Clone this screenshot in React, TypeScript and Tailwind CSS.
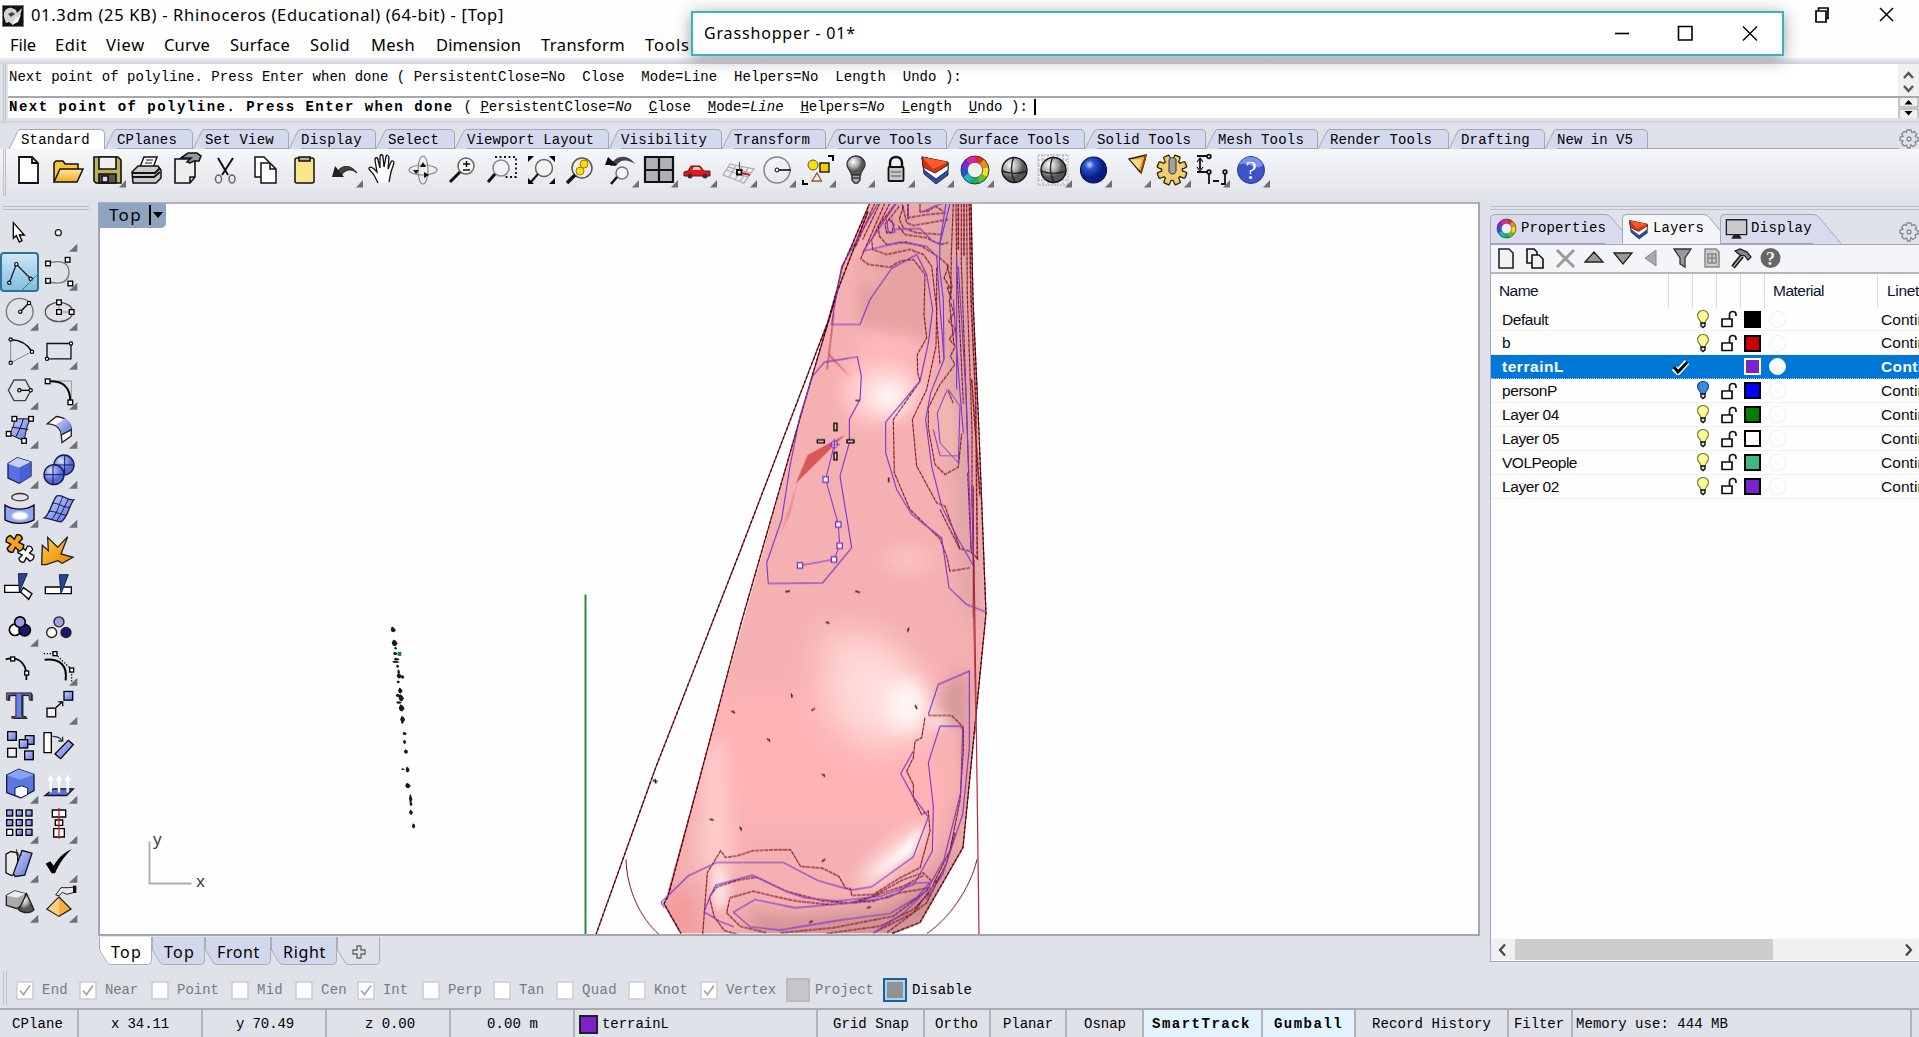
import React, { useLayoutEffect, useRef, useState } from "react";

/* Text whose letter spacing is adjusted so that it fills a given width. */
function Fit({ w, className = "", children }: { w: number; className?: string; children: string }) {
  const ref = useRef<HTMLSpanElement>(null);
  const [ls, setLs] = useState(0);
  useLayoutEffect(() => {
    if (ref.current) setLs((w - ref.current.getBoundingClientRect().width) / children.length);
  }, [w, children]);
  return (
    <span ref={ref} className={"whitespace-pre " + className} style={{ letterSpacing: ls }}>
      {children}
    </span>
  );
}

const MONO = "font-['Liberation_Mono','Noto_Sans_CJK_SC',monospace]";
const UI = "font-['Noto_Sans','Open_Sans',sans-serif]";

/* ---------- title and menu ---------- */
const menus: [string, number, number][] = [
  ["File", 26, 45], ["Edit", 32, 51], ["View", 39, 58], ["Curve", 46, 66], ["Surface", 60, 80],
  ["Solid", 40, 61], ["Mesh", 44, 65], ["Dimension", 85, 105], ["Transform", 84, 104], ["Tools", 45, 45],
];

function TitleArea() {
  return (
    <div className={"h-[58px] bg-[#fefefe] text-black " + UI}>
      <div className="flex h-[31px] items-center pl-[2px]">
        <svg width="22" height="22" viewBox="0 0 22 22">
          <rect width="22" height="22" fill="#111" />
          <path d="M2 12C1 6 5 2 10 3l4 2 1 3 5-5-2 8-4 2-3 7-4-3-3 1z" fill="#d4d4d4" />
          <path d="M6 9l4-2 3 2-4 3z" fill="#444" />
          <path d="M10 20l3-7 6-3-3 7z" fill="#f4f4f4" />
          <rect x=".5" y=".5" width="21" height="21" fill="none" stroke="#777" />
        </svg>
        <Fit w={473} className="ml-[7px] text-[16.5px]">01.3dm (25 KB) - Rhinoceros (Educational) (64-bit) - [Top]</Fit>
        <svg className="-mt-[2px] ml-auto mr-[22px]" width="84" height="20" viewBox="0 0 84 20" fill="none" stroke="#000" strokeWidth="1.700">
          <path d="M3 6h10v11H3zM5.500 6V3h9.500v10.500h-2" />
          <path d="M67 3l13 13M80 3L67 16" strokeWidth="1.500" />
        </svg>
      </div>
      <div className="flex h-[29px] items-center pl-[10px] text-[16.5px]">
        {menus.map(([t, w, step]) => (
          <div key={t} className="shrink-0" style={{ width: step }}>
            <Fit w={w}>{t}</Fit>
          </div>
        ))}
      </div>
    </div>
  );
}

function GrasshopperWindow() {
  return (
    <div className={"absolute left-[691px] top-[11px] flex h-[45px] w-[1093px] items-center border-2 border-[#38b4bb] bg-white pb-[2px] pl-[11px] shadow-[0_3px_16px_rgba(40,30,50,0.45)] " + UI}>
      <Fit w={152} className="text-[16px]">Grasshopper - 01*</Fit>
      <svg className="ml-auto mr-[23px]" width="148" height="20" viewBox="0 0 148 20" fill="none" stroke="#000" strokeWidth="1.600">
        <path d="M4 10.500h14" />
        <path d="M67.500 3.500h13.500v13.500H67.500z" />
        <path d="M132 3.500l14 14M146 3.500l-14 14" strokeWidth="1.400" />
      </svg>
    </div>
  );
}

/* ---------- command line ---------- */
function U({ a, b, v }: { a: string; b: string; v?: string }) {
  return (
    <>
      <u>{a}</u>{b}{v && <i>{v}</i>}
    </>
  );
}

function CommandArea() {
  return (
    <div className={"flex h-[60px] shrink-0 text-[14px] text-black " + MONO}>
      <div className="ml-[3px] h-full w-[3px] border-x border-[#bcc0ca]" />
      <div className="ml-[2px] flex flex-1 flex-col">
        <div className="flex h-[32px] bg-white">
          <div className="flex-1 whitespace-pre pl-px pt-[2px] leading-[23px] tracking-[0.03px]">
            Next point of polyline. Press Enter when done ( PersistentClose=No  Close  Mode=Line  Helpers=No  Length  Undo ):
          </div>
          <svg width="21" height="32" className="bg-[#f0f0f0]" viewBox="0 0 21 32" fill="none" stroke="#555" strokeWidth="2.500">
            <path d="M6 14l4.500-5L15 14M6 22l4.500 5L15 22" />
          </svg>
        </div>
        <div className="flex h-[22px] border-t-2 border-[#a5a8b2] bg-white">
          <div className="flex flex-1 whitespace-pre pl-px leading-[18px]">
            <b className="tracking-[1.48px]">Next point of polyline. Press Enter when done </b>
            <span className="tracking-[0.02px]">
              ( <U a="P" b="ersistentClose=" v="No" />{"  "}<U a="C" b="lose" />{"  "}<U a="M" b="ode=" v="Line" />{"  "}
              <U a="H" b="elpers=" v="No" />{"  "}<U a="L" b="ength" />{"  "}<U a="U" b="ndo" /> ):
            </span>
            <span className="ml-[6px] mt-px h-[16px] w-[2px] bg-black" />
          </div>
          <svg width="21" height="20" viewBox="0 0 21 20" className="bg-[#f0f0f0]">
            <path d="M1 0v9h19V0M1 20v-9h19v9" fill="none" stroke="#999" />
            <path d="M6.500 6.500h8l-4-4.500zM6.500 13h8l-4 4.500z" fill="#000" />
          </svg>
        </div>
      </div>
    </div>
  );
}

function GearOutline() {
  return (
    <svg width="20" height="20" viewBox="0 0 20 20" fill="none" stroke="#85888e" strokeWidth="1.300">
      <path d="M8 1h4l.8 2.600 2.600-1 2.300 2.800-1.600 2L19 9v3l-2.900.8.7 2.700-3 2-1.800-1.800L11 19H8.500l-.8-2.900-2.600.9-2.500-2.600L4 12l-3-.8V8l3-.6L2.700 5l2.600-2.600 2 1.200z" />
      <circle cx="10" cy="10" r="2" />
    </svg>
  );
}

/* ---------- toolbar tabs ---------- */
const tabs: [string, number, number][] = [
  ["Standard", 96, 69], ["CPlanes", 88, 60], ["Set View", 96, 69], ["Display", 87, 61], ["Select", 79, 51],
  ["Viewport Layout", 154, 127], ["Visibility", 113, 86], ["Transform", 104, 76], ["Curve Tools", 121, 94],
  ["Surface Tools", 138, 111], ["Solid Tools", 121, 94], ["Mesh Tools", 112, 86], ["Render Tools", 131, 102],
  ["Drafting", 96, 69], ["New in V5", 103, 76],
];

function ToolTabs() {
  return (
    <div className={"mt-[3px] flex h-[28px] items-end border-t-2 border-[#d0d3dc] pl-[9px] text-[14px] text-black " + MONO}>
      {tabs.map(([t, w, tw], i) => (
        <div key={t} className="flex h-[20px] shrink-0" style={{ width: w }}>
          <svg width="12" height="20" viewBox="0 0 12 20" className="shrink-0">
            <path d="M0 20L9 2Q10 .5 12 .5V20z" fill={i ? "#d5d9ee" : "#fff"} />
            <path d="M0 20L9 2Q10 .5 12 .5" fill="none" stroke="#a4a8b6" />
          </svg>
          <div className={"flex-1 rounded-tr-[5px] border-r border-t border-[#a4a8b6] leading-[20px] " + (i ? "border-b bg-[#d5d9ee]" : "bg-white")}>
            <Fit w={tw}>{t}</Fit>
          </div>
        </div>
      ))}
      <div className="h-px flex-1 bg-[#a4a8b6]" />
      <div className="w-[20px]"><GearOutline /></div>
    </div>
  );
}

/* ---------- shared drawings ---------- */
function Defs() {
  return (
    <svg width="0" height="0" className="absolute">
      <defs>
        <radialGradient id="gs" cx=".35" cy=".3"><stop offset="0" stopColor="#fff" /><stop offset=".6" stopColor="#aaa" /><stop offset="1" stopColor="#555" /></radialGradient>
        <radialGradient id="bs" cx=".35" cy=".3"><stop offset="0" stopColor="#cfe0ff" /><stop offset=".35" stopColor="#2a56d8" /><stop offset="1" stopColor="#0a1d80" /></radialGradient>
        <radialGradient id="ps" cx=".35" cy=".3"><stop offset="0" stopColor="#dfe3ff" /><stop offset="1" stopColor="#5468d8" /></radialGradient>
        <linearGradient id="pg" x1="0" y1="0" x2="1" y2="1"><stop offset="0" stopColor="#cdd5ff" /><stop offset="1" stopColor="#5a6fe0" /></linearGradient>
        <linearGradient id="fo" x1="0" y1="0" x2="0" y2="1"><stop offset="0" stopColor="#ffe9a0" /><stop offset="1" stopColor="#f2a71c" /></linearGradient>
        <linearGradient id="or" x1="0" y1="0" x2="1" y2="1"><stop offset="0" stopColor="#ffcf40" /><stop offset="1" stopColor="#f08000" /></linearGradient>
      </defs>
    </svg>
  );
}

function Wheel({ r = 14 }: { r?: number }) {
  const c = ["#e8281e", "#f28a1a", "#f0e020", "#5cc81e", "#18b060", "#18b8c8", "#2050e0", "#7a28d8", "#e020b0"];
  const n = c.length;
  const p = (q: number) => [20 + r * Math.sin((q / n) * 6.2832), 20 - r * Math.cos((q / n) * 6.2832)];
  return (
    <g>
      {c.map((f, i) => {
        const [a, b] = p(i);
        const [d, e] = p(i + 1.05);
        return <path key={f} d={`M20 20L${a} ${b}A${r} ${r} 0 0 1 ${d} ${e}z`} fill={f} />;
      })}
      <circle cx="20" cy="20" r={r} fill="none" stroke="#333" />
      <circle cx="20" cy="20" r={r * 0.55} fill="#eef0f4" stroke="#444" strokeWidth=".8" />
    </g>
  );
}

const LayersGlyph = () => (
  <g stroke="#222" strokeWidth=".9" strokeLinejoin="round">
    <path d="M7 7L33 13V25L21 34 9 24z" fill="#2a4cb8" />
    <path d="M7 7L33 13V20L21 29 9 20z" fill="#fff" />
    <path d="M7 7L33 12V15L20 23 8 17z" fill="#d83010" />
    <path d="M7 7L33 12 18 19z" fill="#ff5a28" stroke="none" />
  </g>
);

/* ---------- main toolbar ---------- */
const k = "#111";
const mainIcons: [React.ReactNode, boolean][] = [
  [<path d="M11 7h13l6 6v20H11z M24 7v6h6" fill="#fff" stroke={k} strokeWidth="1.800" />, false],
  [<g stroke={k} strokeWidth="1.500"><path d="M7 31V13l2-2h7l2 3h13v5" fill="#f9c63d" /><path d="M7 32l6-13h23l-6 13z" fill="url(#fo)" /></g>, false],
  [<g stroke={k} strokeWidth="1.600"><path d="M7 7h24l3 3v23H9l-2-2z" fill="#b9b25a" /><path d="M12 7h17v12H12z" fill="#eee" /><path d="M12 24h17v9H12z" fill="#555" /><path d="M15 26h6v6h-6z" fill="#ddd" /></g>, true],
  [<g stroke={k} strokeWidth="1.500"><path d="M14 17l4-10h13l-4 11z" fill="#fff" /><path d="M6 22l6-6h20l3 4v8l-5 5H7z" fill="#ccc" /><path d="M6 23h23l5-5M6 27h22l6-5" fill="none" strokeWidth="1.800" /><path d="M20 10h7M19 13h7" strokeWidth="1" /></g>, false],
  [<g stroke={k} strokeWidth="1.600"><path d="M9 9h20v18l-5 6H9z M29 27h-5v6" fill="#eee" /><path d="M15 8l7-5h9l4 3-2 5h-5l-4 2-3-1 4-4z" fill="#999" /></g>, false],
  [<g fill="none"><path d="M13 8l10 17M28 8L17 25" stroke={k} strokeWidth="2" /><ellipse cx="13.500" cy="29" rx="3" ry="4" stroke="#666" strokeWidth="1.500" /><ellipse cx="27" cy="29" rx="3" ry="4" stroke="#666" strokeWidth="1.500" /></g>, false],
  [<g fill="#fff" stroke={k} strokeWidth="1.500"><path d="M10 7h9l5 5v15H10z" /><path d="M16 13h9l6 6v14H16z M25 13v6h6" /></g>, false],
  [<g stroke={k} strokeWidth="1.500"><rect x="11" y="8" width="19" height="25" rx="2" fill="#fbe58a" /><path d="M15 7h11v4H15z" fill="#aaa" /></g>, false],
  [<g><path d="M11 25C16 15 26 13 33 23C27 18 21 19 17 26" fill="#444" stroke="#222" /><path d="M8 27l3-11 9 11z" fill="#222" /></g>, true],
  [<path d="M15 33l-4-8-5-6c0-3 3-2 5 0l3 3-2-12c0-3 3-3 3 0l2 8V7c0-3 3-3 3 0l1 10 2-10c0-3 3-2 3 1l-1 11 3-7c1-2 3-1 3 1l-3 9-2 10" fill="#fff" stroke={k} strokeWidth="1.300" />, false],
  [<g fill="none" stroke="#888" strokeWidth="1.200"><ellipse cx="21" cy="20" rx="5" ry="14" /><ellipse cx="21" cy="20" rx="14" ry="5" /><path d="M21 12l-3 5h6zM14 24l-3-4h6zM22 28l5-3-5-3z" fill="#111" stroke="none" /></g>, false],
  [<g fill="none"><circle cx="24" cy="16" r="8" fill="#f5f5f5" stroke="#666" strokeWidth="1.500" /><path d="M18 22L8 32" stroke={k} strokeWidth="3" /><path d="M21 14h7M24.500 11v6M21 20h7" stroke={k} strokeWidth="1.500" /></g>, false],
  [<g fill="none"><path d="M14 7h21v20H24" stroke={k} strokeWidth="1.800" strokeDasharray="2 2.500" /><circle cx="20" cy="18" r="8" fill="#f0f2f5" stroke="#888" strokeWidth="1.500" /><path d="M14 24l-7 8" stroke={k} strokeWidth="3" /></g>, false],
  [<g><circle cx="23" cy="18" r="8.500" fill="#f3f4f6" stroke="#666" strokeWidth="1.500" /><path d="M17 24l-7 8" stroke={k} strokeWidth="2" /><path d="M7 6h6l-6 6zM34 6v6l-6-6zM7 34v-6l6 6zM34 34v-6l-6 6z" fill="#000" /></g>, false],
  [<g><circle cx="22" cy="18" r="10" fill="#eee" stroke="#555" strokeWidth="1.500" /><circle cx="24" cy="14" r="4" fill="#ffe000" stroke="#a08000" /><circle cx="20" cy="21" r="4" fill="#ffe000" stroke="#a08000" /><path d="M15 25l-8 8" stroke={k} strokeWidth="3.500" /></g>, false],
  [<g><path d="M10 16C16 4 28 4 35 14C28 9 20 9 16 16" fill="#444" /><path d="M5 15l3-8 9 8z" fill="#111" /><circle cx="22" cy="23" r="6" fill="#f5f5f5" stroke="#777" strokeWidth="1.500" /><path d="M17 27l-6 7" stroke={k} strokeWidth="2.500" /></g>, true],
  [<g stroke={k} strokeWidth="2.200"><path d="M6 7h28v25H6z" fill="#aeb1b6" /><path d="M20 7v25M6 20h28" /></g>, true],
  [<g><path d="M6 22l4-1 3-5h9l4 5h6v5H6z" fill="#e01818" stroke="#7a0c0c" /><path d="M14 20l2-3h5l2 3z" fill="#f7c8c8" /><circle cx="12" cy="26" r="2.500" fill="#333" /><circle cx="27" cy="26" r="2.500" fill="#333" /></g>, true],
  [<g fill="none" stroke="#aaa" strokeWidth="1.200"><path d="M12 14l24 5-10 14L5 25zM10 17l23 6M8 20l22 7M18 15L11 28M24 17l-7 13M30 18l-8 14" /><path d="M19 20h4.500v4.500H19z" stroke="#000" fill="#fff" strokeWidth="1.800" /><path d="M24 23l8 2" stroke="#d02020" strokeWidth="2" /><path d="M21.500 20v-8" stroke="#555" /></g>, true],
  [<g fill="none"><circle cx="20" cy="20" r="13" stroke="#888" strokeWidth="1.500" /><path d="M20 20h14" stroke="#000" strokeWidth="1.500" /><circle cx="20" cy="20" r="2" fill="#fff" stroke="#000" /></g>, true],
  [<g><circle cx="16" cy="15" r="5" fill="#ffe000" stroke="#555" /><path d="M23 13h9v9h-9z" fill="#ffc800" stroke="#222" strokeWidth="1.500" /><path d="M20 23l4.500 8H15z" fill="#eee" stroke="#8a5a30" strokeWidth="1.300" /><path d="M31 6h5v5M6 30v4h5" fill="none" stroke="#000" strokeWidth="2" /></g>, true],
  [<g stroke="#333" strokeWidth="1.400"><path d="M15.500 25c0-4-4.500-6-4.500-10.500a9 8.500 0 0 1 18 0c0 4.500-4.500 6.500-4.500 10.500z" fill="url(#gs)" /><path d="M16 25h8v5l-2.500 3h-3L16 30z" fill="#aaa" /><path d="M16 28h8" /></g>, true],
  [<g><path d="M14 17v-4c0-8 12-8 12 0v4" fill="none" stroke={k} strokeWidth="2.500" /><rect x="12.500" y="17" width="15" height="14" rx="1" fill="#c8c9cb" stroke={k} strokeWidth="1.800" /><path d="M15 22h10M15 26h10" stroke="#555" /></g>, true],
  [<LayersGlyph />, true],
  [<Wheel />, true],
  [<g><circle cx="20.500" cy="20" r="12.500" fill="url(#gs)" stroke="#111" strokeWidth="1.400" /><path d="M20 7c-4 8-3 18 1 25M8 21c8 3 17 3 25 0" fill="none" stroke="#222" strokeWidth="1.400" /></g>, false],
  [<g><path d="M5 5h30v30H5zM5 10h30M5 15h30M5 20h30M5 25h30M5 30h30M10 5v30M15 5v30M20 5v30M25 5v30M30 5v30" fill="none" stroke="#b9bcc1" strokeWidth="1.300" strokeDasharray="2 1" /><circle cx="20.500" cy="20" r="12.500" fill="url(#gs)" stroke="#111" strokeWidth="1.400" /><path d="M20 7c-4 8-3 18 1 25M8 21c8 3 17 3 25 0" fill="none" stroke="#222" strokeWidth="1.400" /></g>, true],
  [<circle cx="20.500" cy="20" r="13" fill="url(#bs)" stroke="#0a1350" strokeWidth="1.200" />, true],
  [<g stroke="#222" strokeWidth="1.400"><path d="M17 9l17-4-5 18z" fill="#f7a820" /><path d="M18 9.500l9 10 3-10z" fill="#fbd88a" stroke="none" /><path d="M34 5l-5 18" stroke="#7a4a10" strokeWidth="2" /></g>, true],
  [<g>
    {[0, 45, 90, 135, 180, 225, 270, 315].map(a => <rect key={a} x="17" y="5" width="6" height="8" rx="1" fill="#e8c458" stroke="#2a2205" strokeWidth="1.300" transform={`rotate(${a + 22} 20 20)`} />)}
    <circle cx="20" cy="20" r="10.500" fill="#efcf72" stroke="#2a2205" strokeWidth="1.200" />
    {[0, 45, 90, 135, 180, 225, 270, 315].map(a => <rect key={a} x="17.700" y="7" width="4.600" height="5" fill="#efcf72" transform={`rotate(${a + 22} 20 20)`} />)}
    <path d="M17 10c0-3 7-3 7 0v11c0 4-7 4-7 0z" fill="#a0a0a0" stroke="#333" /></g>, true],
  [<g fill="none" stroke="#111" strokeWidth="1.800"><path d="M6 6h12M6 22h12v12M9 9v10M34 22v12h-4M22 31h6" /><path d="M6 12l3-4 3 4M6 17l3 4 3-4" strokeWidth="1.200" /><circle cx="18" cy="6.500" r="1.800" fill="#fff" /><circle cx="18" cy="22" r="1.800" fill="#fff" /><circle cx="34" cy="22" r="1.800" fill="#fff" /></g>, true],
  [<g><circle cx="20" cy="20" r="13.500" fill="#3c54c8" stroke="#2a3c98" /><path d="M8 15a13 13 0 0 1 24 0C24 22 16 10 8 15" fill="#7b90ec" /><text x="20" y="29" textAnchor="middle" fontSize="25" fill="#fff" fontFamily="Liberation Serif, serif">?</text></g>, true],
];

function MainToolbar() {
  return (
    <div className="flex h-[54px] items-start bg-linear-to-b from-[#f6f7f9] to-[#dee1e7] pl-[3px]">
      <div className="h-[47px] w-[3px] border-x border-[#bcc0ca]" />
      <div className="ml-[2px] flex pt-px">
        {mainIcons.map(([g, tri], i) => (
          <div key={i} className="w-[39.44px] shrink-0">
            <svg width="40" height="40" viewBox="0 0 40 40">
              {g}
              {tri && <path d="M39 30v7.500h-7z" fill="#6e7075" />}
            </svg>
          </div>
        ))}
      </div>
    </div>
  );
}

/* ---------- left tool palette ----------
   Cells are drawn on two continuous sheets: rows 0-8 and rows 9-17. */
const hd = (x: number, y: number, r = 7) => <rect x={x - r} y={y - r} width={2 * r} height={2 * r} fill="#fff" stroke="#000" strokeWidth="4" />;
const cc = (x: number, y: number, r = 5) => <circle cx={x} cy={y} r={r} fill="#fff" stroke="#000" strokeWidth="3.500" />;
const sq = (x: number, y: number, s = 26, f = "url(#pg)") => <rect x={x} y={y} width={s} height={s} fill={f} stroke="#000" strokeWidth="4" />;
const PIECE = "M-9 -22q9-9 18 0l-2 13 14-2q8 10 0 20l-14-2 2 14q-9 8-18 0l2-14-14 2q-8-10 0-20l14 2z";

const palette: [React.ReactNode, boolean][][] = [
  [[<path d="M40 67v47l9-8 9 19 8-4-8-17h15z" fill="#fff" stroke="#000" strokeWidth="4" />, false],
   [<circle cx="176" cy="97" r="9" fill="#fff" stroke="#222" strokeWidth="4" />, true]],
  [[<g><path d="M28 249L49 193l43 44" fill="none" stroke="#222" strokeWidth="4" />{cc(28, 249)}{cc(49, 193)}{cc(92, 237)}<path d="M65 272l50-50" stroke="#3a6f92" strokeWidth="3" /></g>, false],
   [<g><path d="M145 190c40-12 65 0 63 30s-30 35-63 25" fill="none" stroke="#777" strokeWidth="4" />{hd(145, 191)}{hd(204, 180)}{hd(145, 243)}{hd(212, 251)}</g>, true]],
  [[<g><circle cx="59" cy="334" r="40" fill="none" stroke="#777" strokeWidth="4" /><path d="M61 334l25-25" stroke="#000" strokeWidth="4" />{cc(61, 334)}{cc(87, 308)}</g>, true],
   [<g><ellipse cx="178" cy="335" rx="41" ry="29" fill="none" stroke="#555" strokeWidth="4" /><path d="M178 306v29h38" fill="none" stroke="#888" strokeWidth="3" />{hd(178, 306)}{hd(178, 335)}{hd(216, 335)}</g>, true]],
  [[<g fill="none"><path d="M32 419v70l64-34" stroke="#888" strokeWidth="3" /><path d="M32 419c35 2 52 15 64 37" stroke="#000" strokeWidth="5" />{cc(32, 419)}{cc(32, 489)}{cc(96, 456)}</g>, true],
   [<g><path d="M142 431h72v46h-72z" fill="none" stroke="#111" strokeWidth="4" />{cc(214, 431)}{cc(142, 477)}</g>, true]],
  [[<g><path d="M25 570l17-31h34l17 31-17 31H42z" fill="none" stroke="#444" strokeWidth="4" /><path d="M58 570h34" stroke="#000" strokeWidth="4" />{cc(58, 570)}{cc(92, 570)}</g>, true],
   [<g><path d="M152 542h63v58" fill="none" stroke="#999" strokeWidth="3" /><path d="M144 543c45-3 68 15 68 62" fill="none" stroke="#000" strokeWidth="6" />{hd(144, 543)}{hd(212, 606)}</g>, true]],
  [[<g stroke="#111" strokeWidth="3"><path d="M43 657h50c-15 20-15 45-21 66L26 702c15-15 17-30 17-45z" fill="url(#pg)" /><path d="M35 682l50 7M70 657c-6 20-12 35-22 53" fill="none" />{hd(43, 657)}{hd(93, 657)}{hd(26, 702)}{hd(72, 723)}</g>, true],
   [<g stroke="#222" strokeWidth="4"><path d="M143 672l27-22c27 2 45 20 45 40l-30 18c0-20-15-36-42-36z" fill="#fff" /><path d="M167 675l30-20c14 8 18 22 18 35l-30 15c0-15-6-25-18-30z" fill="url(#pg)" stroke="none" /><path d="M185 705l30-15v18l-28 20z" fill="#fff" /></g>, true]],
  [[<g stroke="#1a2050" strokeWidth="4"><path d="M24 790l28-18 41 13v42l-35 22-34-16z" fill="#5a70e0" /><path d="M24 790l28-18 41 13-35 17z" fill="#c6d0ff" stroke="none" /><path d="M58 802v46l34-20v-43z" fill="#4a60d4" stroke="none" /></g>, true],
   [<g stroke="#111a50" strokeWidth="4"><circle cx="193" cy="794" r="30" fill="url(#ps)" /><circle cx="163" cy="823" r="30" fill="url(#ps)" /><path d="M164 794h58M195 765v58M134 823h56M160 795v57" strokeWidth="3" /></g>, true]],
  [[<g stroke="#000" strokeWidth="4"><ellipse cx="60" cy="892" rx="25" ry="11" fill="none" stroke="#333" /><path d="M15 916c25 16 62 16 87 0v44c-25 14-62 14-87 0z" fill="#93a4f4" /><ellipse cx="60" cy="948" rx="24" ry="12" fill="#fff" stroke="#c8d0ff" /></g>, true],
   [<g stroke="#111a50" strokeWidth="4"><path d="M172 888c20-5 30 15 50 12-15 20-18 55-38 66-20-2-30-10-50-12 18-10 22-50 38-66z" fill="url(#pg)" /><path d="M190 889c-12 25-18 55-35 70M207 897c-15 25-20 45-36 66M157 910c20-2 32 15 55 12M146 934c20-2 30 10 53 12" fill="none" strokeWidth="3" /></g>, true]],
  [[<g stroke="#111" strokeWidth="4"><path d={PIECE} transform="translate(77 1062) rotate(35) scale(1.050)" fill="#fff" /><path d={PIECE} transform="translate(44 1030) rotate(35) scale(1.150)" fill="#f9a21c" /></g>, false],
   [<path d="M128 1035l18 16-2-40 30 30 30-32-20 52 36 10-32 18-14-8-34 12h-14z" fill="url(#or)" stroke="#222" strokeWidth="4" />, false]],
  [[<g stroke="#000" strokeWidth="4"><path d="M14 77h45v21H14zM70 84l26 18-10 17-24-22z" fill="#fff" /><path d="M55 42h27L58 97z" fill="#2a4490" stroke="#142050" strokeWidth="3" /></g>, false],
   [<g stroke="#000" strokeWidth="4"><path d="M137 82h78v20h-78z" fill="#fff" /><path d="M179 45h27l-22 58z" fill="#2a4490" stroke="#142050" strokeWidth="3" /></g>, false]],
  [[<g strokeWidth="5" stroke="#000"><circle cx="45" cy="209" r="17" fill="#fff" /><circle cx="74" cy="210" r="17" fill="#1c1470" /><circle cx="60" cy="186" r="16" fill="#a49ae8" /></g>, true],
   [<g strokeWidth="4" stroke="#222"><circle cx="178" cy="185" r="15" fill="#a49ae8" /><circle cx="156" cy="217" r="15" fill="#fff" /><circle cx="199" cy="217" r="15" fill="#1c1470" /></g>, false]],
  [[<g fill="none" stroke="#000" strokeWidth="5"><path d="M17 299c45-12 66 20 62 62" />{hd(38, 298, 6)}{hd(80, 340, 6)}</g>, false],
   [<g fill="none" stroke="#000" strokeWidth="6"><path d="M135 300c50-4 68 20 63 62" /><path d="M132 282h34l50 48v40" strokeWidth="4" strokeDasharray="4 5" />{hd(166, 282, 6)}{hd(216, 331, 6)}</g>, true]],
  [[<g><text x="61" y="479" textAnchor="middle" fontSize="116" fontWeight="bold" fill="#222" fontFamily="Liberation Serif, serif">T</text><text x="57" y="476" textAnchor="middle" fontSize="116" fontWeight="bold" fill="#6a80e8" stroke="#222" strokeWidth="3" fontFamily="Liberation Serif, serif">T</text></g>, false],
   [<g>{sq(193, 397)}{sq(142, 447, 26, "#f2f2f2")}<path d="M168 446l18-16M176 428h13v13" fill="none" stroke="#000" strokeWidth="4" /></g>, true]],
  [[<g>{sq(23, 516)}{sq(76, 528)}{sq(58, 540, 25)}{sq(23, 566, 26, "#f2f2f2")}{sq(74, 574)}</g>, false],
   [<g stroke="#000" strokeWidth="4"><path d="M133 519h22v60h-22z" fill="#fff" /><path d="M166 583l40-41 15 13-38 42z" fill="url(#pg)" /><path d="M158 530c16 0 24 5 28 12M176 544l13 0v-13" fill="none" stroke="#333" /></g>, false]],
  [[<g stroke="#111a40" strokeWidth="4"><path d="M20 648l36-18 46 16v48l-40 22-42-16z" fill="#5c78e0" /><path d="M20 648l36-18 46 16-40 16z" fill="#8aa2f6" stroke="none" /><path d="M45 686l20-6 18 6v20l-20 10-18-8z" fill="#fff" strokeWidth="3" /></g>, true],
   [<g><path d="M136 709l25-20h60l-20 20z" fill="#5a70e0" stroke="#111" strokeWidth="4" /><path d="M153 700v-45M178 700v-45M204 700v-45" stroke="#fff" strokeWidth="7" /><path d="M143 664l10-18 10 18zM168 664l10-18 10 18zM194 664l10-18 10 18z" fill="#fff" /></g>, true]],
  [[<g>{[0, 1, 2].map(r => [0, 1, 2].map(c => <g key={r * 3 + c}>{sq(20 + c * 29, 751 + r * 29, 18, r === 2 && c === 0 ? "#fff" : "url(#pg)")}</g>))}</g>, true],
   [<g fill="#fff" stroke="#000" strokeWidth="4"><path d="M158 751h40v21h-40zM167 781h22v16h-22zM162 807h32v25h-32z" /><path d="M178 745v92" stroke="#d81818" /></g>, true]],
  [[<g stroke="#111" strokeWidth="4"><path d="M18 885l15-8 20 4v60l-18 8-17-8z" fill="#e8e8e8" /><path d="M66 874l30 8-22 66-28 4-6-8z" fill="url(#pg)" /><path d="M50 870v18h16" fill="none" stroke="#333" strokeWidth="3" /></g>, true],
   [<path d="M138 914l14-8 10 14c12-22 30-40 54-50-22 20-36 42-50 72h-10z" fill="#000" />, true]],
  [[<g stroke="#222" strokeWidth="4"><path d="M19 1008l25-14 32 8v28l-25 17-32-10z" fill="#aaa" /><path d="M19 1008l25-14 32 8-25 12z" fill="#eee" stroke="none" /><path d="M80 1002l-24 48c14 12 36 12 46 0z" fill="url(#gs)" /></g>, true],
   [<g stroke="#222" strokeWidth="4"><path d="M178 1012l36 36-36 22-36-22z" fill="#f5b040" /><path d="M178 1014v54l-33-20z" fill="#fbd080" stroke="none" /><path d="M168 1006l16-22h24l16-2v16l-22 6-14-6-10 10z" fill="#e8e8e8" strokeWidth="3" /><path d="M220 978h10v22h-10z" fill="#111" stroke="none" /></g>, true]],
];

function Palette() {
  return (
    <div className="w-[98px] shrink-0">
      <div className="ml-[3px] mt-[4px] h-[4px] w-[86px] border-y border-[#b4b8c2]" />
      <div className="mt-[3px] grid grid-cols-[39.33px_39.33px]">
        {palette.map((row, r) =>
          row.map(([g, tri], c) => {
            const oy = r < 9 ? 38 + 118.5 * r : 25 + 118.5 * (r - 9);
            const ox = c * 118;
            const on = r === 1 && c === 0;
            return (
              <div key={`${r}-${c}`} className={"h-[39.46px] " + (on ? "rounded-[4px] border-2 border-[#2f7199] bg-linear-to-b from-[#cfe6f4] to-[#7fbfe0]" : "")}>
                <svg className={on ? "-ml-[2px] -mt-[2px]" : ""} width="39.33" height="39.5" viewBox={`${ox} ${oy} 118 118.5`} overflow="visible">
                  {g}
                  {tri && <path d={`M${ox + 115} ${oy + 92}v24h-25z`} fill="#6e7075" />}
                </svg>
              </div>
            );
          })
        )}
      </div>
    </div>
  );
}

/* ---------- viewport ---------- */
const RED = "#7c1220";
const PUR = "#7a35cf";

const ticksLower: [number, number, number][] = [
  [743, 70, 20], [985, 91, -70], [460, 338, 25], [635, 289, 80], [700, 330, -30], [566, 422, 45], [1008, 323, 60],
  [731, 528, 40], [395, 661, 10], [482, 688, 65], [731, 783, -35], [867, 924, -10], [693, 967, -20],
];

const trail: [number, number, number, number][] = [
  [40, 46, 16, 14], [38, 40, 10, 7], [44, 85, 18, 20], [47, 101, 9, 8], [46, 117, 14, 10], [50, 134, 18, 8], [48, 142, 24, 7], [53, 155, 10, 10],
  [56, 172, 8, 16], [58, 184, 16, 16], [68, 187, 11, 11], [55, 202, 10, 8], [61, 228, 14, 18], [55, 243, 16, 10], [64, 250, 16, 22], [57, 264, 18, 8],
  [65, 280, 18, 22], [68, 314, 15, 20], [67, 324, 8, 8], [74, 357, 13, 10], [74, 382, 10, 13], [78, 411, 13, 13], [69, 464, 12, 5], [83, 465, 12, 18],
  [84, 513, 17, 16], [92, 552, 10, 28], [93, 568, 9, 13], [93, 593, 12, 15], [101, 634, 10, 16],
];

function Scene() {
  return (
    <svg className="block" width="1378" height="730" viewBox="100 204.5 1378 730">
      <defs>
        <clipPath id="body">
          <path d="M870 203L850 250 842 268 837 290 825 330 812 377 668 890 664 906 680 934 894 934 920 923 963 848 986 614 978 433 973 300 971 203z" />
        </clipPath>
        <filter id="b8" x="-50%" y="-50%" width="200%" height="200%"><feGaussianBlur stdDeviation="9" /></filter>
        <filter id="b16" x="-50%" y="-50%" width="200%" height="200%"><feGaussianBlur stdDeviation="17" /></filter>
        <filter id="b4" x="-50%" y="-50%" width="200%" height="200%"><feGaussianBlur stdDeviation="4" /></filter>
      </defs>

      {/* shaded terrain */}
      <g clipPath="url(#body)">
        <path d="M640 200h360v740H640z" fill="#f5b0b1" />
        <path d="M700 690h280v140H720z" fill="#ffb3b5" filter="url(#b16)" />
        <path d="M925 200h55v440l-20-40-10-200z" fill="#dfa5a7" filter="url(#b8)" />
        <path d="M862 210l60-4 10 140-50-6-22-20 28-58z" fill="#e4a2a2" filter="url(#b8)" />
        <path d="M855 262l36-12 30 16v70l-60-10z" fill="#e6a2a1" filter="url(#b4)" />
        <ellipse cx="868" cy="275" rx="18" ry="10" fill="#fbbcbc" opacity=".6" filter="url(#b8)" />
        <path d="M866 330l58 10-16 50-45 45-25-40z" fill="#ffb9ba" filter="url(#b8)" />
        <ellipse cx="884" cy="394" rx="38" ry="28" fill="#ffd8d8" opacity=".8" filter="url(#b8)" />
        <ellipse cx="888" cy="397" rx="16" ry="16" fill="#fff" opacity=".85" filter="url(#b8)" />
        <ellipse cx="908" cy="560" rx="26" ry="12" fill="#fcc2c2" filter="url(#b8)" />
        <path d="M940 395c8 0 15 8 16 28l-2 36-16-10z" fill="#f3b6b0" filter="url(#b4)" />
        <path d="M820 628l60 8 38 44 14 45-60 30-50-40z" fill="#ffcfcf" filter="url(#b16)" />
        <path d="M850 650l40 10 34 56-26 20-48-20z" fill="#ffe0df" filter="url(#b16)" />
        <ellipse cx="908" cy="706" rx="20" ry="26" fill="#fff" opacity=".75" filter="url(#b8)" />
        <ellipse cx="945" cy="724" rx="12" ry="12" fill="#fff" opacity=".7" filter="url(#b4)" />
        <path d="M928 815L880 882l-25 2 24-28z" fill="#ffecec" filter="url(#b8)" />
        <path d="M925 822l-12 32-40 24z" fill="#fff" filter="url(#b4)" />
        <path d="M704 740l20 0 10 130-36 6z" fill="#ffd2d2" opacity=".8" filter="url(#b8)" />
        <ellipse cx="720" cy="888" rx="9" ry="22" fill="#fff" opacity=".6" filter="url(#b4)" />
        <path d="M940 690l29-22v120l-12 74-24 60h-36l54-75 8-60z" fill="#d29598" filter="url(#b8)" />
        <path d="M934 730l26-3v60l-10 20z" fill="#f7b3b2" filter="url(#b4)" />
        <path d="M742 912l50 6 92-10 40-24 10 20-30 34H760z" fill="#c98c8e" opacity=".9" filter="url(#b8)" />
        <path d="M668 880l24 16 12 40h-40z" fill="#f08888" opacity=".55" filter="url(#b8)" />
      </g>

      {/* darker facets */}
      <g transform="translate(740 200) scale(.33333)" fill="#d04a4a" opacity=".85">
        <path d="M315 706L203 766 167 852 275 745z" />
        <path d="M262 455l10 22 62 58z" opacity=".8" />
        <path d="M282 340L261 510" fill="none" stroke="#a02828" strokeWidth="3" />
        <path d="M172 850l-50 150 30-60z" opacity=".35" />
      </g>

      {/* outlines of the terrain and of the construction curves */}
      <g fill="none" stroke="#a01020" strokeWidth="1.200">
        <path id="rim" d="M870 203L850 250 842 268 837 290 828 322 740 552 655 770 596 935M868 212L838 290 812 377 741 624 668 897 664 904 681 934M971 203L973 300 979 433 986 614 963 848 920 923 892 934" />
        <use href="#rim" stroke="#160408" strokeDasharray="2.500 2.500" />
        <path d="M974 560L977 780 979 935" stroke="#b02a34" />
        <path d="M626 860C627 890 640 918 659 935M977 860C970 890 948 920 927 934" strokeWidth="1" stroke={RED} />
      </g>

      {/* upper contours */}
      <g transform="translate(740 200) scale(.33333)" fill="none" strokeWidth="3.300">
        <g stroke={RED} strokeDasharray="12 2.500">
          <path d="M405 10L345 145M420 10L368 120M435 10L372 155 362 178 385 195 450 203 480 185 520 180 555 225 552 345 560 415 532 465 533 520 540 545 460 660 463 820 510 930 600 1018 620 1070 630 1115 690 1105" />
          <path d="M450 10L395 120 398 150 440 165 510 150 550 165 575 200 590 330 588 440 560 570 517 660 530 800 590 910 615 920 660 1048 690 1055 715 1080" />
          <path d="M468 10L415 80 418 110 440 135 500 128 545 140 600 175 626 200 612 235 630 265 622 265 635 300" />
          <path d="M478 20L435 75 440 100 455 100 462 75 445 58M490 20L478 60 490 85 530 100 605 105" />
          <path d="M487 15L500 70 520 78 625 60M475 80L495 105 560 115 600 135 625 130M503 10v45l60-10 55-5M540 12v25l25-2 20-15 25 15" />
          <path d="M632 310l10 30-16 25 20 25-18 30 18 20-15 30 14 25-45 60-35 70 0 60 20 110 30 30 40-22 10-100" />
          <path d="M622 200l14 60-8 45 14 130M590 205v150l10 140M625 575l14 35" />
          <path d="M640 12l-6 150-2 140M648 12l2 180 20 420M664 12v180l14 390 8 240M680 12l2 280 14 400 0 230" />
          <path d="M655 10v140M672 12v160M688 10l5 290 14 300 5 480M695 540l25 350" strokeWidth="4.500" />
          <path d="M600 930l60 120M683 820l10 230" />
        </g>
        <g stroke={PUR}>
          <path d="M415 10L305 200 280 340 275 375 360 375 390 300 455 207 530 165 560 225 578 330 565 430 540 545 437 668 437 760 470 870 515 945 605 1015 627 1165 680 1215 740 1238" />
          <path d="M470 10L370 155 480 128 560 140 590 170 600 320 612 480 572 580 557 660 575 800 605 920 655 1020 700 1098 695 860" />
          <path d="M440 60L445 98 465 98 455 60M465 90l75-3 40 40 20 5 30-120M505 10v50M540 40l70-30" />
          <path d="M600 130L598 200 610 300 612 480M618 10L600 130M650 170v400M640 300l20 280 10 120M655 200l24 400 15 460" />
          <path d="M253 488L352 472 364 530 360 600 328 660 328 730 300 830 318 940 335 1045 248 1150 85 1152 80 1090 125 960 150 800 180 650 218 530z" />
          <path d="M622 570L592 640 600 730 655 790 660 620 625 570M580 690l20 78h55" strokeWidth="3" />
        </g>
        <g stroke={PUR} strokeWidth="3">
          <path d="M180 1098L282 1080 299 1039 295 975 257 840 283 735" />
          {[[180, 1098], [282, 1080], [299, 1039], [295, 975], [257, 840]].map(([x, y]) => (
            <rect key={y} x={x - 8} y={y - 8} width="16" height="16" fill="#fff" strokeWidth="4" />
          ))}
          <circle cx="283" cy="735" r="10" fill="#f2c0d0" />
          <path d="M266 735h34M283 718v34" />
        </g>
        <g stroke="#000" strokeWidth="4" fill="#f2c8c8">
          <path d="M282 671h9v22h-9zM282 759h9v22h-9zM232 721h21v9h-21zM321 721h21v9h-21z" />
        </g>
        <path d="M700 860V1255" stroke="#902030" />
        <path d="M346 603h14M446 834v14M136 1177l14-3M346 1175l14 4" stroke="#5a2028" strokeWidth="5" />
      </g>

      {/* lower contours */}
      <g transform="translate(580 600) scale(.33333)" fill="none" strokeWidth="3.300">
        <g stroke={RED} strokeDasharray="12 2">
          <path d="M1045 348h70l35 35 0 70-10 150-30 150-50 100M1035 355l-10 60-20 10-5 50-20 40 20 40 0 40 25 50 20-10 5 60-30 110-60 30-80 50-65 3-3-20-15-2-20-35-50-25-65-5-30-50h-50l-65 3-45 15-35 5-15-20-40 65-15 200 35 50" />
          <path d="M1055 845l-25-25-60 20-100 55-60 15-80-5-110-30-90-42-60 10-60 20-22 30 15 60 30 40 50 15" />
          <path d="M1050 865L960 880 880 905 750 915 650 905 580 890 520 875 450 895 440 940 480 980 560 1000" />
          <path d="M1045 870L940 950 760 985 600 1000M1048 880L1000 930 900 980 740 1002M1080 830l-80 110-120 60M1125 700l-25 90-60 120-120 90" />
          <path d="M1030 828L970 860 880 890 820 912" />
        </g>
        <g stroke={PUR}>
          <path d="M1045 345l30-90 93-40v230l-20 200-60 180-50 75" />
          <path d="M1000 455l-38 67 38 70 45 60-45 120-125 90-60 10-100-28-105-55H410l-85 40-82 80 10 15" />
          <path d="M1080 380h62l6 10-6 190-50 200-50 90-70 70-90 60M1080 380l-35 110 15 130-3 135-55 100-100 35-130 15-100-10-55-20-100-48-110 30-15 30-20 50 50 30 40 15" />
          <path d="M460 938l65-38 120 25 170-15 110-15 30-15 35-28 60-3-40 45-80 48-150 20-180 30-90-10z" />
        </g>
        {ticksLower.map(([x, y, a]) => (
          <path key={`${x}-${y}`} d="M-7 0h12M-2 -3l8 4" transform={`translate(${x} ${y}) rotate(${a})`} stroke="#5a2028" strokeWidth="4" />
        ))}
        <path d="M218 545h16M226 538v14M220 539l10 12" stroke="#111" strokeWidth="3" />
        <path d="M1180 0l8 400" stroke="#b04050" strokeWidth="3" />
      </g>

      {/* people placed along the path */}
      <g transform="translate(380 615) scale(.33333)" fill="#141a18">
        {trail.map(([x, y, w, h]) => (
          <path key={`${x}-${y}`} d={`M${x - w / 2} ${y}l${w * 0.3} ${-h / 2} ${w * 0.4} ${h * 0.2} ${w * 0.3} ${h * 0.4} ${-w * 0.4} ${h * 0.4} ${-w * 0.4} ${-h * 0.1}z`} />
        ))}
        <rect x="53" y="112" width="11" height="12" fill="#187850" />
      </g>

      {/* axes */}
      <path d="M585.500 595V935" stroke="#2d8a3e" strokeWidth="2" />
      <path d="M149.500 842v42h42" fill="none" stroke="#a9abaf" strokeWidth="1.800" />
      <text x="153" y="845" fontSize="17" fill="#444" fontFamily="Noto Sans, sans-serif">y</text>
      <text x="196" y="887" fontSize="17" fill="#444" fontFamily="Noto Sans, sans-serif">x</text>
    </svg>
  );
}

const viewTabs: [string, number, number][] = [["Top", 53, 31], ["Top", 53, 31], ["Front", 66, 43], ["Right", 66, 43], ["", 43, 0]];

function Viewport() {
  return (
    <div className="w-[1382px] shrink-0">
      <div className="relative h-[734px] border-2 border-[#a3a6ae] border-t-[#b0b3ba] bg-[#fefefe]">
        <Scene />
        <div className={"absolute -left-px -top-px flex h-[25px] w-[67px] items-center rounded-br-[5px] bg-[#8fa4c1] pb-px pl-[10px] text-black " + UI}>
          <Fit w={33} className="text-[17px]">Top</Fit>
          <span className="ml-[7px] h-[20px] w-[2px] bg-black" />
          <svg className="ml-[2px]" width="10" height="6" viewBox="0 0 10 6"><path d="M0 0h10L5 6z" fill="#000" /></svg>
        </div>
      </div>
      <div className={"mt-px flex h-[28px] pl-px text-[16px] text-black " + UI}>
        {viewTabs.map(([t, w, tw], i) => (
          <div key={i} className="flex h-[28px]" style={{ width: w }}>
            <svg width="12" height="28" viewBox="0 0 12 28" className="shrink-0">
              <path d="M0 0v13l8 13q1 1.500 4 1.500V0z" fill={i === 0 ? "#fff" : i === 4 ? "#dfe2e8" : "#d3d7ec"} />
              <path d="M.5 0v13l8 13q1 1.500 4 1.500" fill="none" stroke="#a9adb8" />
            </svg>
            <div className={"flex flex-1 items-center rounded-br-[5px] border-b border-r border-[#a9adb8] pt-[2px] " + (i === 0 ? "bg-white" : i === 4 ? "bg-[#dfe2e8]" : "bg-[#d3d7ec]")}>
              {t ? <Fit w={tw}>{t}</Fit> : (
                <svg className="ml-[3px]" width="14" height="14" viewBox="0 0 14 14"><path d="M5 1h4v4h4v4H9v4H5V9H1V5h4z" fill="none" stroke="#666" strokeWidth="1.300" /></svg>
              )}
            </div>
          </div>
        ))}
      </div>
    </div>
  );
}

/* ---------- layers panel ---------- */
function PanelTab({ icon, label, w, tw, active }: { icon: React.ReactNode; label: string; w: number; tw: number; active?: boolean }) {
  return (
    <div className="flex h-[30px] shrink-0" style={{ width: w }}>
      <div className={"flex flex-1 items-center rounded-tl-[5px] border-l border-t border-[#a4a8b6] pb-[2px] pl-[4px] " + (active ? "bg-[#f4f5f8]" : "border-b bg-[#d8dbec]")}>
        <svg width="23" height="23" viewBox="3 3 34 34" className="mt-px shrink-0">{icon}</svg>
        <Fit w={tw} className="ml-[3px] mr-[-40px] text-[14px]">{label}</Fit>
      </div>
      <svg width="29" height="30" viewBox="0 0 29 30" className="-mr-[12px] shrink-0">
        <path d="M0 .5h1q3 0 6 4L28 29.500H0z" fill={active ? "#f4f5f8" : "#d8dbec"} />
        <path d="M0 .5h1q3 0 6 4L28 29.500" fill="none" stroke="#a4a8b6" />
      </svg>
    </div>
  );
}

const layers: [string, number, string, string?][] = [
  ["Default", 46, "#000"], ["b", 8, "#c80000"], ["terrainL", 62, "#7a22cc", "sel"], ["personP", 55, "#0000ff", "off"],
  ["Layer 04", 57, "#008000"], ["Layer 05", 57, "#fff"], ["VOLPeople", 75, "#3cbb80"], ["Layer 02", 57, "#7a22cc"],
];

function Bulb({ off }: { off?: boolean }) {
  return (
    <svg width="14" height="19" viewBox="0 0 14 19">
      <path d="M5 13C5 10 1.500 9 1.500 5.500a5.500 5 0 0 1 11 0C12.500 9 9 10 9 13z" fill={off ? "#3a8ae0" : "#fdfb9a"} stroke={off ? "#1a4a90" : "#7d7c30"} strokeWidth="1.200" />
      <path d="M5 13h4v3l-2 1.500L5 16z" fill="#ddd" stroke="#111" strokeWidth="1.400" />
    </svg>
  );
}

const panelIcons: React.ReactNode[] = [
  <path d="M4 2h10l4 4v15H4z" fill="#f2f2f2" stroke="#222" strokeWidth="1.600" />,
  <g fill="#f2f2f2" stroke="#111" strokeWidth="1.600"><path d="M3 2h7l3 3v11H3z" /><path d="M8 8h7l4 4v9H8z" /></g>,
  <path d="M3 3l17 17M20 3L3 20" stroke="#9c9c9c" strokeWidth="3" />,
  <path d="M2 15l9-10 9 10z" fill="#9a9a9a" stroke="#222" strokeWidth="1.300" />,
  <path d="M2 6h18l-9 11z" fill="#9a9a9a" stroke="#222" strokeWidth="1.300" />,
  <path d="M15 3v16L4 11z" fill="#aaa" stroke="#888" />,
  <path d="M3 2h17l-6 9v9l-5-3v-6z" fill="#999" stroke="#333" strokeWidth="1.300" />,
  <g fill="#ccc" stroke="#888" strokeWidth="1.500"><path d="M5 2h11l3 3v15H5z" /><path d="M8 7h8v9H8zM8 11h8M12 7v9" fill="none" /></g>,
  <g><path d="M4 20L13 9" stroke="#111" strokeWidth="4.500" /><path d="M4.500 19.500L13 9" stroke="#aaa" strokeWidth="1.500" /><path d="M6 4l5-2 7 3 4 5-3 3-3-4-5-1z" fill="#888" stroke="#111" strokeWidth="1.200" /></g>,
  <g><circle cx="11.500" cy="11" r="10" fill="#666" /><text x="11.500" y="18" textAnchor="middle" fontSize="18" fontWeight="bold" fill="#eee" fontFamily="Liberation Serif, serif">?</text></g>,
];

function LayersPanel() {
  const cols = "grid grid-cols-[178px_24px_24px_24px_24px_113px_90px]";
  return (
    <div className="ml-[10px] flex-1 overflow-hidden">
      <div className="mt-[4px] h-[4px] border-y border-[#bcc0ca]" />
      <div className={"mt-[4px] flex h-[30px] text-black " + MONO}>
        <PanelTab w={132} tw={85} label="Properties" icon={<Wheel />} />
        <PanelTab w={98} tw={51} label="Layers" active icon={<LayersGlyph />} />
        <PanelTab w={110} tw={61} label="Display" icon={<g stroke="#222" strokeWidth="2"><path d="M5 7h30v22H5z" fill="#c8c9cb" /><path d="M14 34h12l-3-5h-6z" fill="#222" /></g>} />
        <div className="ml-auto mt-[8px] w-[20px]"><GearOutline /></div>
      </div>
      <div className="h-[718px] border border-[#a4a8b6] border-r-0 bg-[#fefefe]">
        <div className="flex h-[29px] items-center gap-[6.300px] border-b-2 border-[#b4b7be] bg-[#f4f5f8] pl-[4px]">
          {panelIcons.map((g, i) => <svg key={i} width="23" height="23" viewBox="0 0 23 23" fill="none">{g}</svg>)}
        </div>
        <div className="h-[665px] overflow-hidden font-['Liberation_Sans','Noto_Sans_CJK_SC',sans-serif] text-[15.5px] text-[#0a0a14]">
          <div className={"h-[33.5px] text-[#0a1430] " + cols}>
            <span className="border-r border-[#dcdde0] pl-[8px] pt-[5px]"><Fit w={39}>Name</Fit></span>
            {[0, 1, 2, 3].map(i => <span key={i} className="border-r border-[#dcdde0]" />)}
            <span className="border-r border-[#dcdde0] pl-[8px] pt-[5px]"><Fit w={51}>Material</Fit></span>
            <span className="pl-[9px] pt-[5px]"><Fit w={56}>Linetype</Fit></span>
          </div>
          {layers.map(([n, w, c, st]) => {
            const sel = st === "sel";
            return (
              <div key={n} className={"h-[23.9px] items-center border-b " + cols + (sel ? " border-dotted border-[#9cc8f0] bg-[#0078d7] font-bold text-white" : " border-[#f1f1f1]")}>
                <span className="pl-[11px]"><Fit w={w}>{n}</Fit></span>
                <span>
                  {sel && <svg className="ml-[3px]" width="18" height="16" viewBox="0 0 18 16"><path d="M2 9l4 4L15 3" fill="none" stroke="#fff" strokeWidth="6" /><path d="M2 8l4 5L15.500 3" fill="none" stroke="#000" strokeWidth="3" /></svg>}
                </span>
                <span className="flex justify-center pr-[4px]">{!sel && <Bulb off={st === "off"} />}</span>
                <span className="pl-[3px]">
                  {!sel && <svg width="18" height="18" viewBox="0 0 18 18" fill="none" stroke="#111" strokeWidth="1.700"><path d="M2 9h10v7.500H2z" fill="#fff" /><path d="M9.500 9V4.500c0-4 6.500-4 6.500 0V6" /></svg>}
                </span>
                <span className={"ml-[3px] h-[17px] w-[17px] border-2 " + (sel ? "border-white" : "border-black")} style={{ background: c }} />
                <span className={"ml-[4px] h-[17px] w-[17px] rounded-full border " + (sel ? "border-white bg-white" : "border-dotted border-[#dedede]")} />
                <span className="pl-[3px]"><Fit w={sel ? 90 : 79}>Continuous</Fit></span>
              </div>
            );
          })}
        </div>
        <div className="flex h-[21px] items-center bg-[#f0f0f0]">
          <svg width="24" height="14" viewBox="0 0 23 14" fill="none" stroke="#444" strokeWidth="2.200"><path d="M13.500 1.500L8.500 7l5 5.500" /></svg>
          <div className="h-full w-[258px] bg-[#cdcdcd]" />
          <svg className="ml-auto" width="18" height="14" viewBox="0 0 18 14" fill="none" stroke="#444" strokeWidth="2.200"><path d="M5 1.500L10 7l-5 5.500" /></svg>
        </div>
      </div>
    </div>
  );
}

/* ---------- bottom bars ---------- */
const snaps: [string, number, number, boolean][] = [
  ["End", 63, 26, true], ["Near", 72, 33, true], ["Point", 80, 42, false], ["Mid", 64, 26, false], ["Cen", 62, 26, false], ["Int", 65, 25, true],
  ["Perp", 71, 34, false], ["Tan", 63, 25, false], ["Quad", 72, 35, false], ["Knot", 72, 34, false], ["Vertex", 85, 50, true],
];

function SnapBar() {
  return (
    <div className={"flex h-[42px] items-center pt-[6px] text-[14px] text-[#777a80] " + MONO}>
      <div className="-mt-[4px] ml-[3px] h-[34px] w-[4px] border-x border-[#bcc0ca]" />
      <div className="w-[9px]" />
      {snaps.map(([t, w, tw, on]) => (
        <div key={t} className="flex shrink-0 items-center" style={{ width: w }}>
          <svg width="18" height="19" viewBox="0 0 18 19"><rect x="1" y="1" width="16" height="17" fill="#fff" stroke="#cbcdd2" strokeWidth="1.500" />{on && <path d="M4 9.500l3.500 4L14 4.500" fill="none" stroke="#a5a7ab" strokeWidth="1.800" />}</svg>
          <Fit w={tw} className="ml-[8px]">{t}</Fit>
        </div>
      ))}
      <span className="ml-px h-[24px] w-[24px] border-2 border-[#bcbcbe] bg-[#c6c6c8]" />
      <span className="ml-[5px] w-[68px]"><Fit w={59}>Project</Fit></span>
      <span className="h-[24px] w-[24px] border-2 border-[#1f5f98] bg-[#929292] shadow-[inset_0_0_0_2px_#a8d4f2]" />
      <Fit w={60} className="ml-[5px] text-black">Disable</Fit>
    </div>
  );
}

const status: [string, number, number, number, string?][] = [
  ["CPlane", 79, 12, 51], ["x 34.11", 124, 32, 58], ["y 70.49", 124, 33, 58], ["z 0.00", 124, 38, 50], ["0.00 m", 124, 36, 51],
  ["terrainL", 243, 27, 67, "color"], ["Grid Snap", 107, 15, 76], ["Ortho", 66, 10, 43], ["Planar", 76, 12, 50], ["Osnap", 77, 17, 42],
  ["SmartTrack", 119, 8, 99, "on"], ["Gumball", 93, 11, 69, "on"], ["Record History", 153, 16, 119], ["Filter", 64, 5, 50], ["Memory use: 444 MB", 339, 3, 152],
];

function StatusBar() {
  return (
    <div className={"flex h-[29px] border-t-2 border-[#a9acb3] text-[14px] text-black " + MONO}>
      {status.map(([t, w, pl, tw, st]) => (
        <div key={t} className={"relative shrink-0 border-r-2 border-[#b0b3ba] pt-[3px] leading-[23px] " + (st === "on" ? "bg-[#e4f4ff] font-bold" : "")} style={{ width: w, paddingLeft: pl }}>
          {st === "color" && <span className="absolute left-[4px] top-[5px] h-[19px] w-[19px] border-2 border-[#222] bg-[#7a22cc]" />}
          <Fit w={tw}>{t}</Fit>
        </div>
      ))}
    </div>
  );
}

export default function App() {
  return (
    <div className="relative flex h-[1037px] w-[1919px] flex-col overflow-hidden bg-[#dfe2e8]">
      <Defs />
      <div className="h-[58px] shrink-0"><TitleArea /></div>
      <div className="h-[6px] shrink-0 bg-linear-to-b from-[#eceef2] to-[#cfd2da]" />
      <div className="h-[54px] shrink-0"><CommandArea /></div>
      <div className="h-[31px] shrink-0"><ToolTabs /></div>
      <div className="h-[53px] shrink-0"><MainToolbar /></div>
      <div className="flex h-[764px] shrink-0">
        <Palette />
        <Viewport />
        <LayersPanel />
      </div>
      <div className="h-[42px] shrink-0"><SnapBar /></div>
      <StatusBar />
      <GrasshopperWindow />
    </div>
  );
}
